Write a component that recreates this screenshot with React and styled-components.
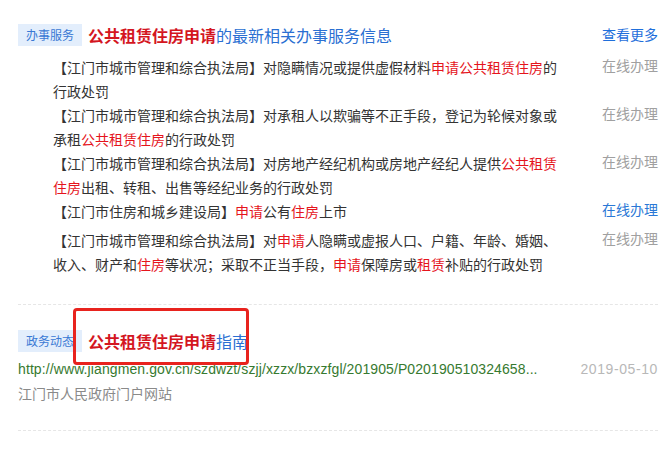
import React from 'react'
import styled, { createGlobalStyle } from 'styled-components'

const GlobalStyle = createGlobalStyle`
    body {
        margin: 0;
        background: #ffffff;
        font-family: "Liberation Sans", "Noto Sans CJK SC", sans-serif;
        color: #333333;
    }
`;

const Page = styled.div`
    padding: 0 14px 0 18px;
`;

const Section = styled.div`
    position: relative;
    padding-top: ${props => props.top || 25}px;
    padding-bottom: ${props => props.bottom || 0}px;
    border-bottom: ${props => props.last ? 'none' : '1px dashed #e6e6e6'};
`;

const Head = styled.div`
    display: flex;
    align-items: center;
    height: 22px;
`;

const Badge = styled.span`
    flex: none;
    width: 64px;
    height: 22px;
    line-height: 22px;
    text-align: center;
    font-size: 12px;
    color: #3a79d4;
    background: #e3eefc;
    font-family: "Noto Sans CJK SC", sans-serif;
`;

const Title = styled.span`
    margin-left: 6px;
    font-size: 16px;
    color: #2a6fd2;
    font-family: "Noto Sans CJK SC", sans-serif;
    flex: 1;
`;

const TitleKey = styled.b`
    color: #d4161f;
    font-weight: bold;
`;

const More = styled.a`
    font-size: 14px;
    color: #1f6fdb;
    text-decoration: none;
    font-family: "Noto Sans CJK SC", sans-serif;
    margin-top: -3px;
`;

const List = styled.div`
    margin-top: 9px;
    padding-left: 35px;
`;

const Row = styled.div`
    display: flex;
    justify-content: space-between;
    align-items: flex-start;
`;

const RowText = styled.div`
    width: 510px;
    font-size: 14px;
    line-height: 24px;
    font-family: "Noto Sans CJK SC", sans-serif;
    color: #333333;
`;

const Hl = styled.span`
    color: #e5141c;
`;

const Action = styled.a`
    font-size: 14px;
    line-height: 20px;
    padding-bottom: 9px;
    color: ${props => props.active ? '#2a78d6' : '#a0a0a0'};
    text-decoration: none;
    font-family: "Noto Sans CJK SC", sans-serif;
`;

const UrlRow = styled.div`
    display: flex;
    justify-content: space-between;
    margin-top: 5px;
    font-size: 14px;
    line-height: 24px;
`;

const Url = styled.span`
    color: #377a30;
    letter-spacing: 0.1px;
`;

const Date = styled.span`
    color: #b8b8b8;
    letter-spacing: 0.6px;
`;

const Source = styled.div`
    font-size: 14px;
    line-height: 24px;
    color: #8a8a8a;
    font-family: "Noto Sans CJK SC", sans-serif;
`;

const Highlight = styled.div`
    position: absolute;
    left: 55px;
    top: 3px;
    width: 176px;
    height: 57px;
    box-sizing: border-box;
    border: 3px solid #e8231e;
    border-radius: 4px;
    pointer-events: none;
`;

const items = [
    {parts: ['【江门市城市管理和综合执法局】对隐瞒情况或提供虚假材料', ['申请公共租赁住房'], '的行政处罚']},
    {parts: ['【江门市城市管理和综合执法局】对承租人以欺骗等不正手段，登记为轮候对象或承租', ['公共租赁住房'], '的行政处罚']},
    {parts: ['【江门市城市管理和综合执法局】对房地产经纪机构或房地产经纪人提供', ['公共租赁住房'], '出租、转租、出售等经纪业务的行政处罚']},
    {parts: ['【江门市住房和城乡建设局】', ['申请'], '公有', ['住房'], '上市'], active: true},
    {parts: ['【江门市城市管理和综合执法局】对', ['申请'], '人隐瞒或虚报人口、户籍、年龄、婚姻、收入、财产和', ['住房'], '等状况；采取不正当手段，', ['申请'], '保障房或', ['租赁'], '补贴的行政处罚']},
];

const App = () => {
    return (
        <Page>
            <GlobalStyle />
            <Section top={24} bottom={28}>
                <Head>
                    <Badge>办事服务</Badge>
                    <Title><TitleKey>公共租赁住房申请</TitleKey>的最新相关办事服务信息</Title>
                    <More href="#">查看更多</More>
                </Head>
                <List>
                    {items.map((item, i) => (
                        <Row key={i}>
                            <RowText>
                                {item.parts.map((p, j) => Array.isArray(p) ? <Hl key={j}>{p[0]}</Hl> : <span key={j}>{p}</span>)}
                            </RowText>
                            <Action href="#" active={item.active}>在线办理</Action>
                        </Row>
                    ))}
                </List>
            </Section>
            <Section bottom={25}>
                <Head>
                    <Badge>政务动态</Badge>
                    <Title><TitleKey>公共租赁住房申请</TitleKey>指南</Title>
                </Head>
                <UrlRow>
                    <Url>http://www.jiangmen.gov.cn/szdwzt/szjj/xzzx/bzxzfgl/201905/P020190510324658...</Url>
                    <Date>2019-05-10</Date>
                </UrlRow>
                <Source>江门市人民政府门户网站</Source>
                <Highlight />
            </Section>
            <Section last>
                <Head>
                    <Badge>政务动态</Badge>
                    <Title><TitleKey>公共租赁住房</TitleKey>保障政策</Title>
                </Head>
            </Section>
        </Page>
    )
}

export default App;
